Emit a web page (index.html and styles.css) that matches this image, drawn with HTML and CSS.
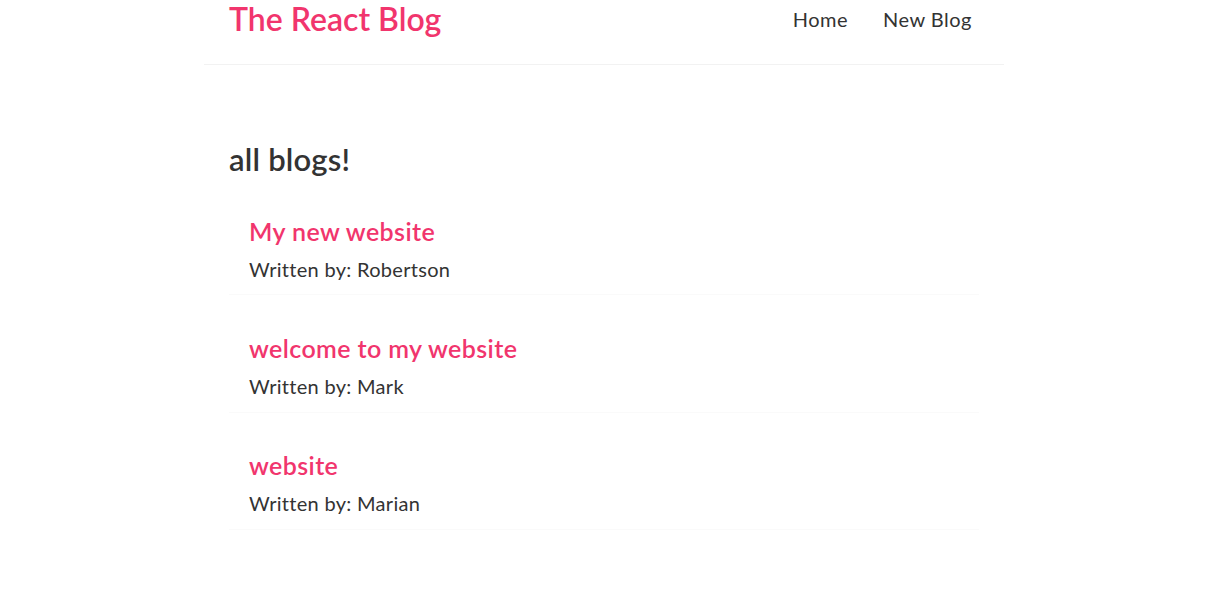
FILE: index.html
```html
<!DOCTYPE html>
<html lang="en">
<head>
<meta charset="utf-8">
<title>The React Blog</title>
<link rel="stylesheet" href="styles.css">
</head>
<body>
<div class="app">
  <nav class="navbar">
    <h1 class="brand">The React Blog</h1>
    <div class="links">
      <a class="link" href="#">Home</a>
      <a class="link" href="#">New Blog</a>
    </div>
  </nav>
  <main class="content">
    <h2 class="page-title">all blogs!</h2>
    <div class="blog-list">
      <div class="blog-preview">
        <h2 class="blog-title">My new website</h2>
        <p class="blog-author">Written by: Robertson</p>
      </div>
      <div class="blog-preview">
        <h2 class="blog-title">welcome to my website</h2>
        <p class="blog-author">Written by: Mark</p>
      </div>
      <div class="blog-preview">
        <h2 class="blog-title">website</h2>
        <p class="blog-author">Written by: Marian</p>
      </div>
    </div>
  </main>
</div>
</body>
</html>
```
FILE: styles.css
```css
* {
  margin: 0;
  box-sizing: content-box;
}
body {
  margin: 0;
  background: #fff;
  font-family: "Lato", "Open Sans", sans-serif;
  color: #333;
}
.app {
  width: 1208px;
}
.navbar {
  width: 750px;
  margin: 0 auto;
  padding: 0 25px 26px;
  display: flex;
  align-items: center;
  border-bottom: 1px solid #f2f2f2;
}
.brand {
  font-size: 32px;
  line-height: 38px;
  font-weight: 600;
  color: #f1356d;
}
.links {
  margin-left: auto;
  display: flex;
}
.link {
  margin-left: 20px;
  padding: 0 7.5px;
  font-size: 20px;
  line-height: 24px;
  font-weight: 400;
  letter-spacing: 0.5px;
  color: #333;
  text-decoration: none;
}
.link:last-child {
  padding-right: 7px;
}
.content {
  width: 750px;
  margin: 51px auto 50px;
  padding: 25px;
}
.page-title {
  font-size: 31px;
  line-height: 1.2;
  font-weight: 600;
  letter-spacing: 0.2px;
  color: #333;
}
.blog-preview {
  padding: 12.5px 20px;
  margin: 25px 0;
  border-bottom: 1px solid #fafafa;
}
.blog-title {
  font-size: 25px;
  line-height: 1.25;
  font-weight: 600;
  letter-spacing: 0.4px;
  color: #f1356d;
  margin-bottom: 10px;
}
.blog-author {
  font-size: 20px;
  line-height: 25px;
  font-weight: 400;
  color: #333;
  letter-spacing: 0.3px;
}
```
